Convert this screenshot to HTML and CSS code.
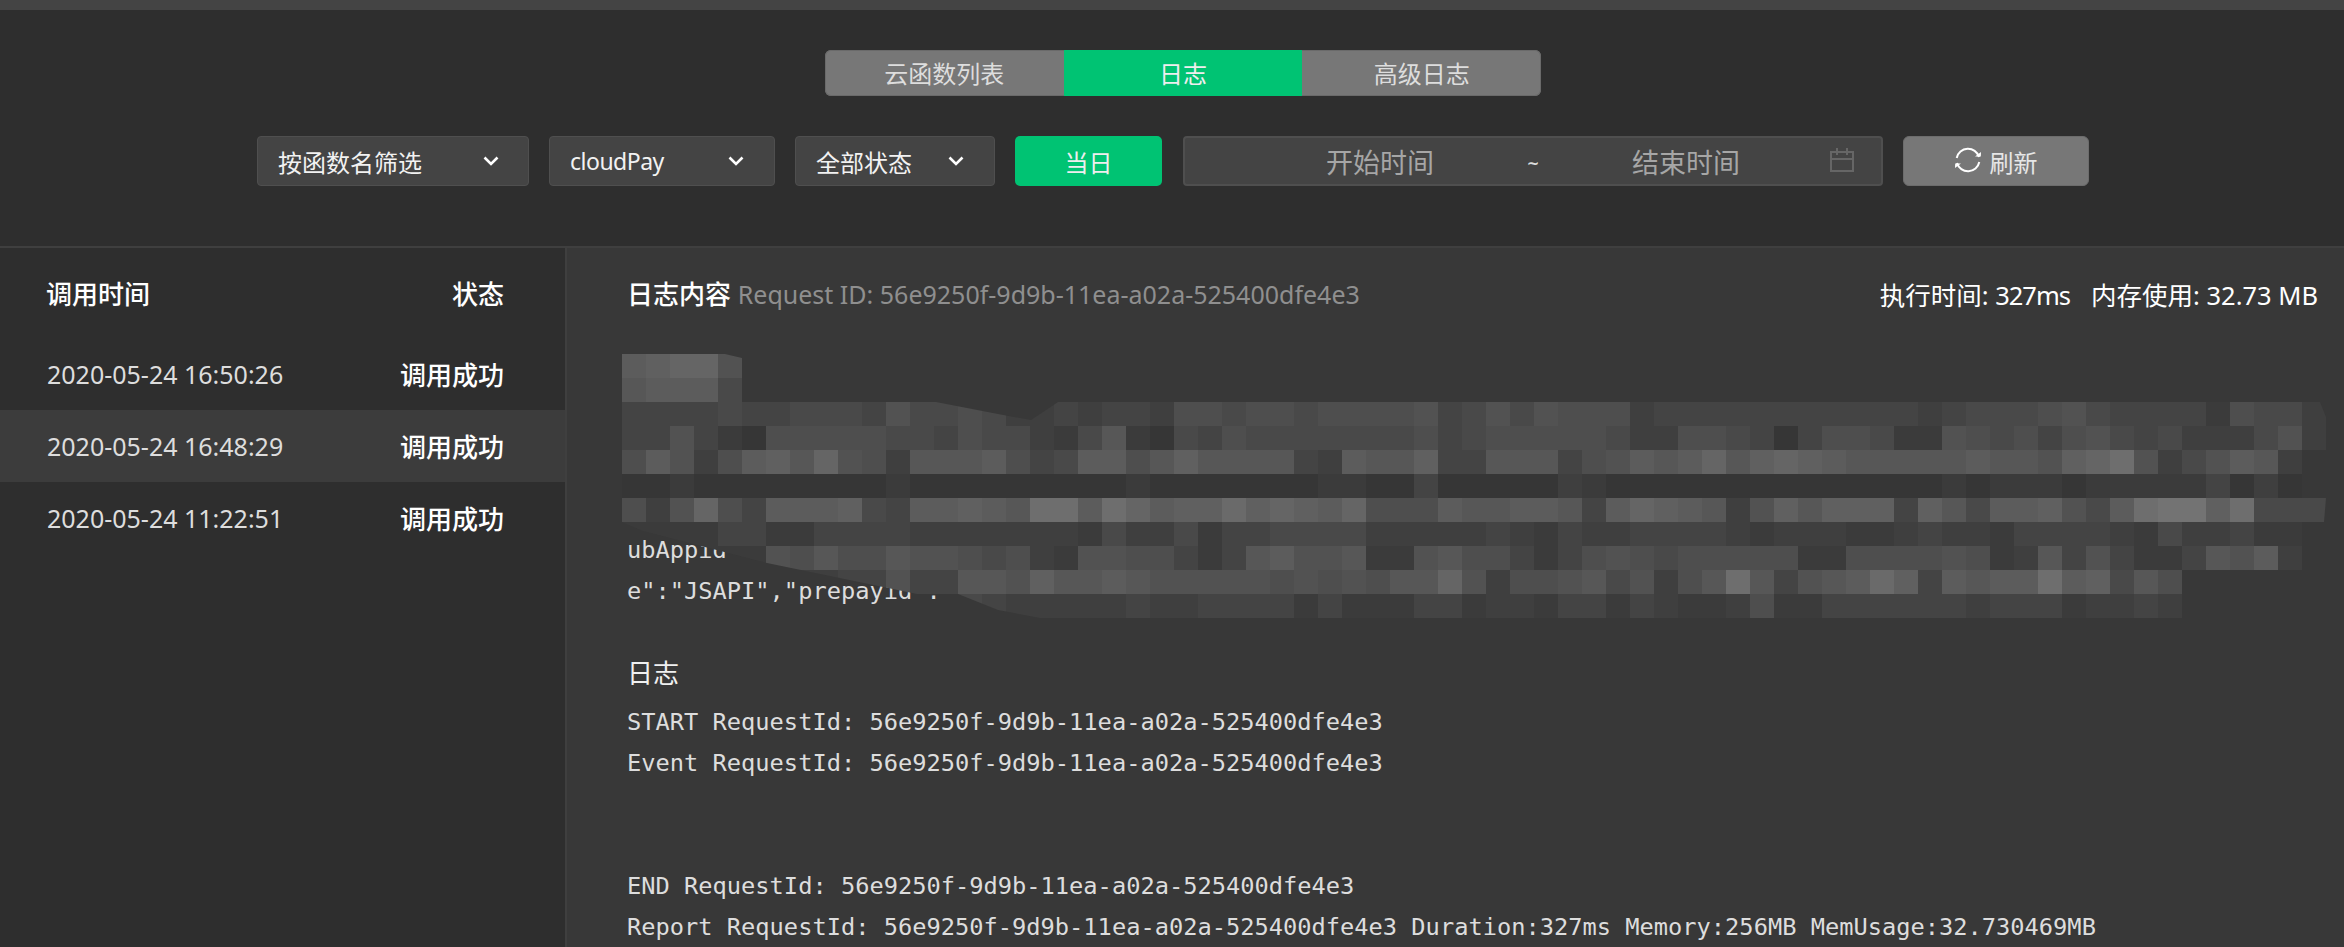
FILE: index.html
```html
<!DOCTYPE html>
<html lang="zh-CN">
<head>
<meta charset="utf-8">
<title>云开发控制台 - 日志</title>
<link rel="stylesheet" href="styles.css">
</head>
<body>
<div class="app">
  <div class="topbar"></div>
  <header class="toolbar">
    <nav class="tabs">
      <a class="tab">云函数列表</a>
      <a class="tab tab-active">日志</a>
      <a class="tab">高级日志</a>
    </nav>
    <div class="filters">
      <div class="select select-name"><span>按函数名筛选</span>
        <svg class="chevron" viewBox="0 0 16 10"><path d="M1.5 1.5 8 8l6.5-6.5"/></svg></div>
      <div class="select select-func"><span class="func-name">cloudPay</span>
        <svg class="chevron" viewBox="0 0 16 10"><path d="M1.5 1.5 8 8l6.5-6.5"/></svg></div>
      <div class="select select-status"><span>全部状态</span>
        <svg class="chevron" viewBox="0 0 16 10"><path d="M1.5 1.5 8 8l6.5-6.5"/></svg></div>
      <button class="btn-today">当日</button>
      <div class="date-range">
        <span class="date-cell date-start">开始时间</span>
        <span class="date-sep">~</span>
        <span class="date-cell date-end">结束时间</span>
        <svg class="calendar" viewBox="0 0 26 26"><path d="M2 5h22v19H2zM2 12h22M8 1v7M18 1v7"/></svg>
      </div>
      <button class="btn-refresh">
        <svg class="refresh" viewBox="0 0 26 26">
          <path class="arc" d="M1.7 11A11.5 11.5 0 0 1 24 10"/>
          <path class="head" d="M20 9.5h5.8l.2-4.5z"/>
          <path class="arc" d="M24.3 15A11.5 11.5 0 0 1 2 16"/>
          <path class="head" d="M6 16.500H.2L0 21z"/>
        </svg>
        <span>刷新</span>
      </button>
    </div>
  </header>
  <main class="main">
    <aside class="sidebar">
      <div class="side-head"><span class="strong">调用时间</span><span class="strong">状态</span></div>
      <div class="side-row"><span class="row-time">2020-05-24 16:50:26</span><span class="strong">调用成功</span></div>
      <div class="side-row side-row-active"><span class="row-time">2020-05-24 16:48:29</span><span class="strong">调用成功</span></div>
      <div class="side-row"><span class="row-time">2020-05-24 11:22:51</span><span class="strong">调用成功</span></div>
    </aside>
    <section class="content">
      <div class="content-head">
        <div class="head-title"><span class="strong">日志内容</span> <span class="request-id">Request ID: 56e9250f-9d9b-11ea-a02a-525400dfe4e3</span></div>
        <div class="head-stats"><span>执行时间: <span class="duration">327ms</span></span><span>内存使用: 32.73 MB</span></div>
      </div>
      <div class="log-body">
        <pre class="log-lines">ubAppid
e":"JSAPI","prepayid":</pre>
        <h3 class="log-title">日志</h3>
        <pre class="log-lines">START RequestId: 56e9250f-9d9b-11ea-a02a-525400dfe4e3
Event RequestId: 56e9250f-9d9b-11ea-a02a-525400dfe4e3


END RequestId: 56e9250f-9d9b-11ea-a02a-525400dfe4e3
Report RequestId: 56e9250f-9d9b-11ea-a02a-525400dfe4e3 Duration:327ms Memory:256MB MemUsage:32.730469MB</pre>
      </div>
      <svg id="mosaic" class="mosaic" viewBox="0 0 1704 264" width="1704" height="264"></svg>
    </section>
  </main>
</div>
<script src="mosaic.js"></script>
</body>
</html>
```
FILE: styles.css
```css
* { box-sizing: border-box; }
html, body { margin: 0; padding: 0; }
body {
  width: 2344px;
  height: 947px;
  overflow: hidden;
  background: #2e2e2e;
  color: #fff;
  font-family: "Noto Sans", "Noto Sans CJK SC", sans-serif;
}
.app { display: flex; flex-direction: column; height: 947px; }
.topbar { height: 10px; background: #444; flex: none; }

.toolbar { flex: none; height: 238px; border-bottom: 2px solid #3f3f3f; padding-top: 40px; }
.tabs {
  display: flex;
  width: 716px;
  height: 46px;
  margin-left: 825px;
  border-radius: 6px;
  overflow: hidden;
  background: #777;
  box-shadow: inset 0 0 0 1px #6a6a6a;
}
.tab {
  flex: 1;
  display: flex;
  align-items: center;
  justify-content: center;
  font-size: 24px;
  color: #ddd;
  padding-bottom: 1px;
}
.tab-active { background: #00c373; color: #eee; }

.filters { display: flex; gap: 20px; height: 50px; margin-top: 40px; padding-left: 257px; }
.select {
  display: flex;
  align-items: center;
  justify-content: space-between;
  height: 50px;
  padding-left: 20px;
  background: #444;
  border: 1px solid #4f4f4f;
  border-radius: 4px;
  font-size: 24px;
  color: #f2f2f2;
}
.select-name { width: 272px; padding-right: 29px; }
.select-func { width: 226px; padding-right: 30px; }
.select-status { width: 200px; padding-right: 30px; }
.func-name { font-size: 23px; letter-spacing: -0.5px; }
.chevron { width: 16px; height: 10px; flex: none; margin-top: -1px; fill: none; stroke: #fff; stroke-width: 2.6; }

.btn-today {
  width: 147px;
  height: 50px;
  border: 0;
  border-radius: 5px;
  background: #00c373;
  color: #eee;
  font: inherit;
  font-size: 24px;
  padding: 0;
}
.date-range {
  display: flex;
  align-items: center;
  width: 700px;
  height: 50px;
  margin-left: 1px;
  padding-left: 99px;
  background: #444;
  border: 2px solid #4f4f4f;
  border-radius: 4px;
  color: #a6a6a6;
  font-size: 27px;
}
.date-cell { width: 192px; text-align: center; }
.date-sep {
  width: 20px;
  margin: 6px 47px 0 47px;
  text-align: center;
  font-family: "DejaVu Sans", sans-serif;
  font-size: 15px;
  font-weight: 700;
  color: #ddd;
}
.calendar { width: 26px; height: 26px; flex: none; margin: -2px 0 0 47px; fill: none; stroke: #666; stroke-width: 2; }

.btn-refresh {
  display: flex;
  align-items: center;
  justify-content: center;
  gap: 9px;
  width: 186px;
  height: 50px;
  padding: 0;
  background: #777;
  border: 1px solid #6c6c6c;
  border-radius: 6px;
  color: #e6e6e6;
  font: inherit;
  font-size: 24px;
}
.refresh { width: 26px; height: 26px; flex: none; margin-top: -2px; }
.arc { fill: none; stroke: #fff; stroke-width: 2; }
.head { fill: #fff; }

.main { flex: 1; display: flex; min-height: 0; }
.sidebar { flex: none; width: 567px; border-right: 2px solid #3f3f3f; background: #2e2e2e; font-size: 26px; }
.strong { font-weight: 500; }
.side-head, .side-row {
  display: flex;
  align-items: center;
  justify-content: space-between;
  padding: 0 61px 0 47px;
}
.side-head { height: 90px; padding-left: 46px; }
.side-row { height: 72px; }
.side-row-active { background: #3c3c3c; }
.row-time { font-size: 25px; color: #ddd; }

.content { flex: 1; min-width: 0; position: relative; background: #383838; padding: 0 26px 0 60px; }
.content-head { display: flex; align-items: center; justify-content: space-between; height: 90px; font-size: 26px; }
.request-id { font-size: 25px; color: #8f8f8f; }
.head-stats { display: flex; gap: 21px; font-size: 25.500px; }
.duration { letter-spacing: -1px; }

.log-body { padding-top: 192px; }
.log-lines {
  margin: 0;
  font-family: "DejaVu Sans Mono", "Liberation Mono", monospace;
  font-size: 23.700px;
  line-height: 41px;
  color: #ddd;
}
.log-title { margin: 41px 0 8px; font-size: 26px; font-weight: 400; line-height: 41px; color: #f0f0f0; }

.mosaic { position: absolute; left: 55px; top: 106px; display: block; shape-rendering: crispEdges; }
```
FILE: mosaic.js
```js
// Pixelated redaction block: each character is one 24px cell, its value a grey level.
var ROWS = [
  "89aa6",
  "78884",
  "3333433444364454" + "22323325545545555634" + "64655523333333333323" + "444564333315442",
  "3363105555544354" + "42147104354444444534" + "55555422554303554116" + "545356434222462",
  "58625897a6527778" + "53488579777732877933" + "777356878a79a9877777" + "87769ac62468720",
  "0010000000010000" + "00000100000001100300" + "00021000000000000001" + "011101111130200",
  "526a538889438898" + "7cc8ca899b9a98a55587" + "788738a9872697999397" + "4889648cdd9c444",
  "1111331133332222" + "22214224133444422222" + "32132233332122211232" + "213333214223110",
  "1111116575576654" + "52166553137866711675" + "53135654555551155556" + "512736311376820",
  "1111112223363377" + "697787666665656577a6" + "2556746257c73678b938" + "788c89475",
  "1111111111111143" + "22222322333313111331" + "22133132112511333333" + "233312232"
];
var OUTLINE = [
  [0,0],[103,0],[120,4],[120,48],[314,48],[376,60],[409,66],[436,48],[1698,48],[1704,63],
  [1704,96],[1680,96],[1680,144],[1704,144],[1702,168],[1680,168],[1680,216],[1560,216],[1560,264],
  [418,264],[376,256],[336,240],[295,240],[145,209],[21,177],[0,168]
];
var NS = "http://www.w3.org/2000/svg";
var svg = document.getElementById("mosaic");
var clip = document.createElementNS(NS, "clipPath");
clip.setAttribute("id", "mosaic-outline");
var poly = document.createElementNS(NS, "polygon");
poly.setAttribute("points", OUTLINE.map(function (p) { return p.join(","); }).join(" "));
clip.appendChild(poly);
svg.appendChild(clip);
var group = document.createElementNS(NS, "g");
group.setAttribute("clip-path", "url(#mosaic-outline)");
ROWS.forEach(function (row, r) {
  row.split("").forEach(function (ch, c) {
    var g = Math.round(0x36 + parseInt(ch, 16) * 4.7);
    var rect = document.createElementNS(NS, "rect");
    rect.setAttribute("x", c * 24);
    rect.setAttribute("y", r * 24);
    rect.setAttribute("width", 24);
    rect.setAttribute("height", 24);
    rect.setAttribute("fill", "rgb(" + g + "," + g + "," + g + ")");
    group.appendChild(rect);
  });
});
svg.appendChild(group);
```
